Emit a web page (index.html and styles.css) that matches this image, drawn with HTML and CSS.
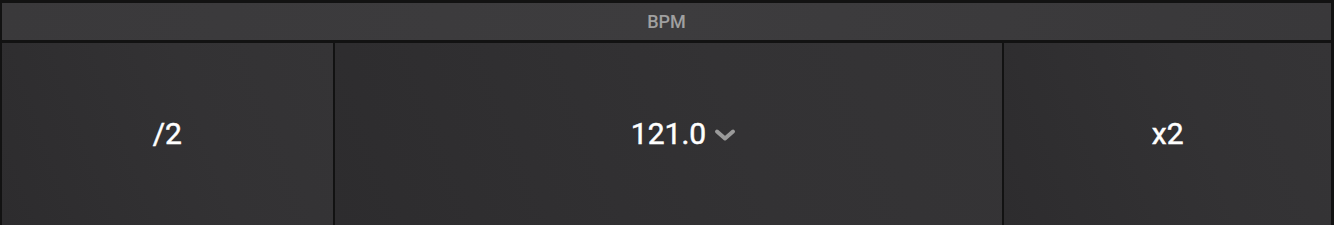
FILE: index.html
```html
<!DOCTYPE html>
<html lang="en">
  <head>
    <meta charset="utf-8" />
    <title>BPM</title>
    <link rel="stylesheet" href="styles.css">
  </head>
  <body>
    <div class="panel">
      <div class="title">BPM</div>
      <div class="buttons">
        <div class="btn">/2</div>
        <div class="btn">
          <span class="value">121.0<svg class="chevron" width="22" height="14" viewBox="0 0 22 14">
              <path d="M3 3.5 L11 10.5 L19 3.5" fill="none" stroke="#9a9a9a" stroke-width="4" stroke-linecap="round" stroke-linejoin="round"/>
            </svg></span>
        </div>
        <div class="btn">x2</div>
      </div>
    </div>
  </body>
</html>
```

FILE: styles.css
```css
html, body {
    margin: 0;
    height: 100%;
    background: #121212;
}

.panel {
    display: flex;
    flex-direction: column;
    height: 225px;
    padding: 3px 3px 0 2px;
    box-sizing: border-box;
    gap: 3px;
    font-family: Roboto, "Liberation Sans", sans-serif;
}

.title {
    height: 37px;
    display: flex;
    align-items: center;
    justify-content: center;
    background: linear-gradient(100deg, #3a393b, #3d3c3e 50%, #39383a);
    color: #a0a0a0;
    font-size: 18px;
    font-weight: 500;
}

.buttons {
    flex: 1;
    display: grid;
    grid-template-columns: 331fr 669fr 327fr;
    gap: 2px;
}

.btn {
    display: flex;
    align-items: center;
    justify-content: center;
    background: linear-gradient(70deg, #2d2c2e, #333234 60%, #353436);
    color: #ffffff;
    font-size: 30px;
    -webkit-text-stroke: 0.5px #ffffff;
    padding-bottom: 2px;
}

.value {
    position: relative;
}

.chevron {
    position: absolute;
    left: 100%;
    top: 50%;
    margin-left: 8px;
    margin-top: -5px;
}
```
